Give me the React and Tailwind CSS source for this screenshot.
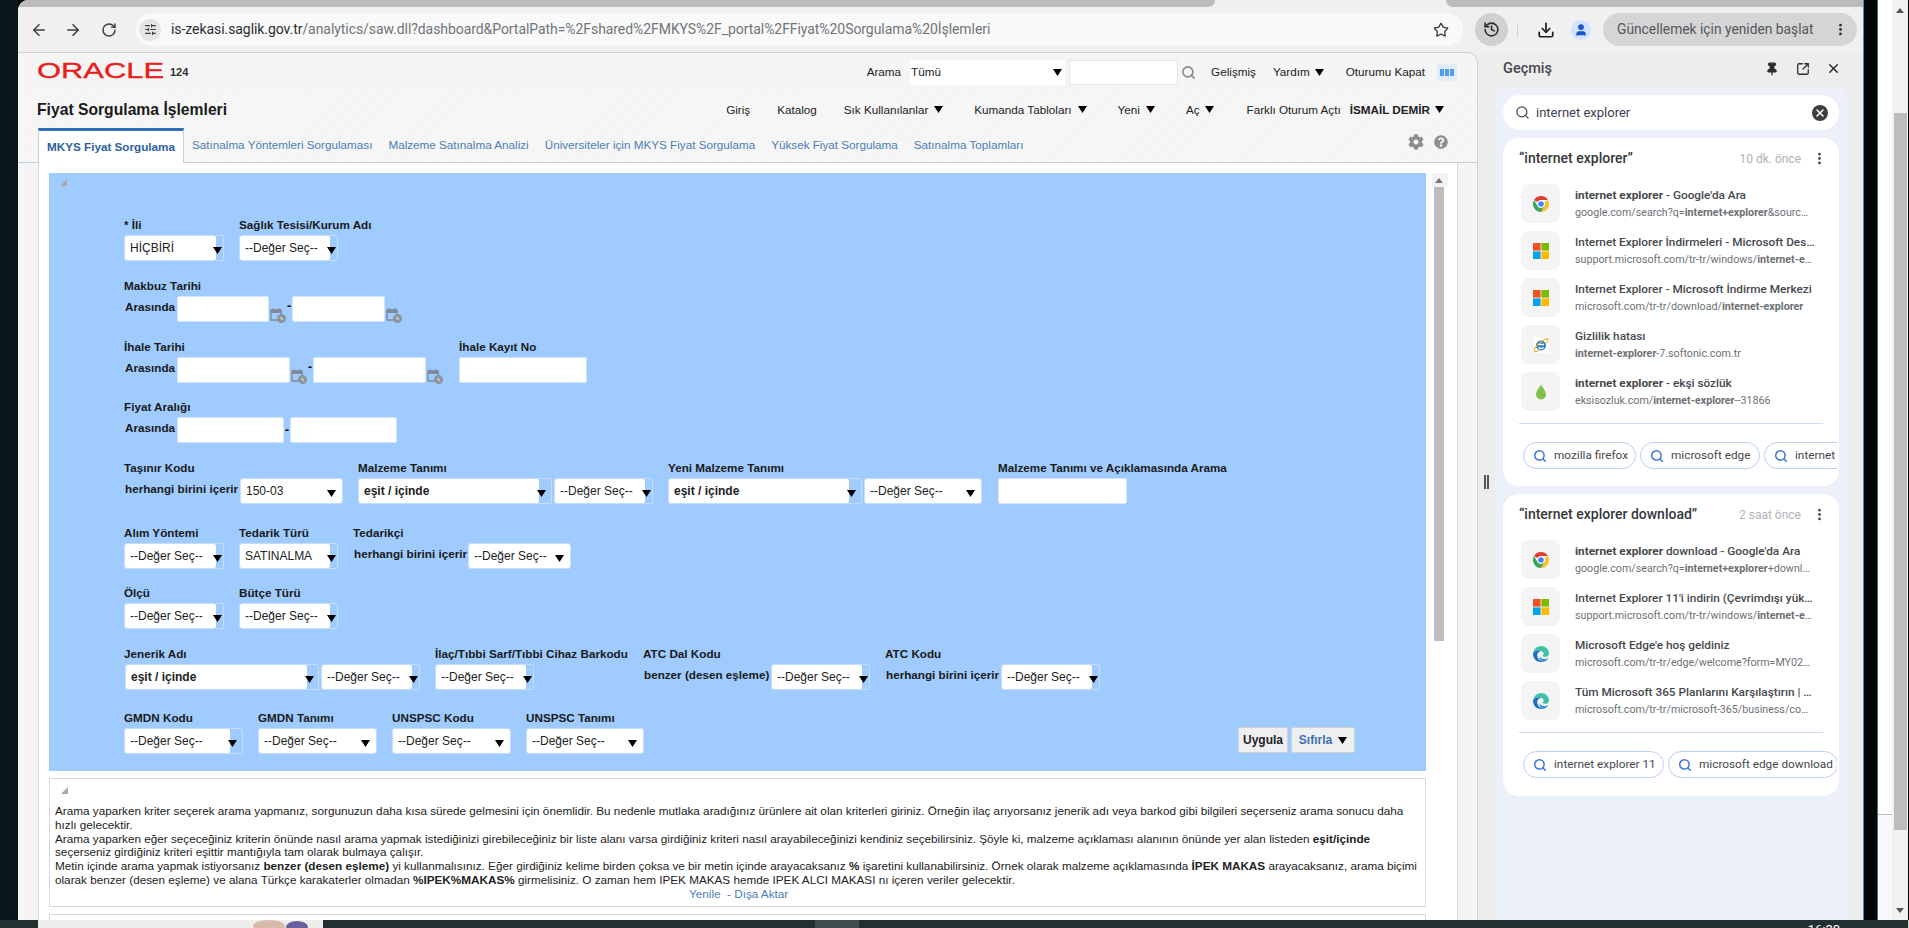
import { ArrowLeft, ArrowRight, RotateCw, Star, History, Download, User, MoreVertical, Pin, SquareArrowOutUpRight, X, Search, SlidersHorizontal } from 'lucide-react'
import { FaCog, FaQuestionCircle } from 'react-icons/fa'

const sans = 'font-["Liberation_Sans",Arial,sans-serif]'
const roboto = 'font-["Roboto",sans-serif]'

function Arrow({ className = '' }) {
    return (
        <svg width="9" height="7" viewBox="0 0 9 7" className={className}>
            <path d="M0 0h9L4.5 7z" fill="#000" />
        </svg>
    )
}

function Corner() {
    return (
        <svg width="7" height="7" viewBox="0 0 7 7" className="block">
            <path d="M7 0v7H0z" fill="#a8a8a8" />
        </svg>
    )
}

// dropdown: white part + optional blue strip, arrow sits on top of the strip
function Select({ w, white, text, bold, arrowRight = 'right-[6px]' }) {
    return (
        <div className={`relative flex h-[26px] shrink-0 rounded-[2px] border border-[#c6dcf7] ${w}`}>
            <div className={`flex items-center rounded-[2px] bg-white pl-[5px] text-[12px] text-[#222] ${white} ${bold ? 'font-bold' : ''}`}>
                {text}
            </div>
            <Arrow className={`absolute top-[11px] ${arrowRight}`} />
        </div>
    )
}

function Input({ w }) {
    return <div className={`h-[26px] shrink-0 rounded-[2px] border border-[#d4e5fa] bg-white ${w}`} />
}

function Calendar() {
    return (
        <svg width="18" height="17" viewBox="0 0 18 17" className="mt-[11px] shrink-0">
            <path d="M2 3h10v10H2z" fill="none" stroke="#7d8a99" strokeWidth="1.3" />
            <path d="M2 3h10v2.5H2zM4 1v2M10 1v2" fill="#7d8a99" stroke="#7d8a99" />
            <circle cx="12.5" cy="11.5" r="4.5" fill="#8c949c" />
            <path d="M12 10v2h2.2" stroke="#dfe6ee" fill="none" />
        </svg>
    )
}

function Field({ label, className = '', children }) {
    return (
        <div className={`shrink-0 ${className}`}>
            <div className="mb-[2px] h-[15px] whitespace-nowrap text-[11.7px] font-bold leading-[13px] text-[#1a1a1a]">{label}</div>
            <div className="flex h-[26px] items-start">{children}</div>
        </div>
    )
}

function Cap({ className = '', children }) {
    return <div className={`flex h-[22px] shrink-0 items-center whitespace-nowrap text-[11.7px] font-bold text-[#1a1a1a] ${className}`}>{children}</div>
}

const PICK = '--Değer Seç--'

function ChromeIcon() {
    return (
        <svg width="16" height="16" viewBox="0 0 16 16">
            <path d="M8 0a8 8 0 0 1 6.93 4H8a4 4 0 0 0-3.46 2L1.07 4A8 8 0 0 1 8 0z" fill="#e33b2e" />
            <path d="M14.93 4A8 8 0 0 1 8 16l3.46-6A4 4 0 0 0 11.46 6z" fill="#fbc02d" />
            <path d="M8 16A8 8 0 0 1 1.07 4l3.47 6A4 4 0 0 0 8 12l3.46-2z" fill="#3aa757" />
            <circle cx="8" cy="8" r="3.7" fill="#fff" />
            <circle cx="8" cy="8" r="2.8" fill="#4285f4" />
        </svg>
    )
}

function MsIcon() {
    return (
        <svg width="16" height="16" viewBox="0 0 16 16">
            <path d="M0 0h7.6v7.6H0z" fill="#f25022" />
            <path d="M8.4 0H16v7.6H8.4z" fill="#7fba00" />
            <path d="M0 8.4h7.6V16H0z" fill="#00a4ef" />
            <path d="M8.4 8.4H16V16H8.4z" fill="#ffb900" />
        </svg>
    )
}

function IeIcon() {
    return (
        <svg width="16" height="16" viewBox="0 0 16 16">
            <path d="M0 0h16v16H0z" fill="#fff" />
            <circle cx="8" cy="8.5" r="5" fill="#2f7fd0" />
            <path d="M5 7.5h6M5.500 10.500c1.500 1.500 4 1.300 5-.2" stroke="#fff" strokeWidth="1.5" fill="none" />
            <path d="M1.500 14C.5 11 8 3 15 1.500M15 1.500c1 1-.5 3-2 5M1.500 14c1 1 3 .5 4.500-.8" stroke="#e5b52f" strokeWidth="1.1" fill="none" />
        </svg>
    )
}

function DropIcon() {
    return (
        <svg width="16" height="16" viewBox="0 0 16 16">
            <path d="M8 .5C9 3 13 6.500 13 10.500a5 5 0 0 1-10 0C3 6.500 7 3 8 .5z" fill="#81c14b" />
        </svg>
    )
}

function EdgeIcon() {
    return (
        <svg width="16" height="16" viewBox="0 0 16 16">
            <path d="M.2 7C1 3 4 0 8 0c4.500 0 8 3.400 8 7.400 0 2.200-1.800 3.400-3.800 3.400-1.300 0-2.500-.4-3-1 1-.4 1.500-1.300 1.400-2.300C10.400 5.600 8.600 4.300 6.300 4.300 3.800 4.300 1.500 5.200.2 7z" fill="#3fc3a8" />
            <path d="M.2 7c1.300-1.800 3.600-2.700 6.100-2.700 1 0 1.800.2 2.500.7C6 5 4.200 6.800 4.200 9.300c0 3.200 2.800 6 6.300 6.500-.8.200-1.600.2-2.500.2-4.500 0-8-3.600-8-8 0-.3.100-.7.200-1z" fill="#1f6fc4" />
            <path d="M10.500 15.800c-2.800-.6-4.500-3-3.800-5.300.7 1.800 2.900 2.800 5.300 2.600 1.200-.1 2.400-.5 3.200-1.200-.9 2-2.700 3.400-4.700 3.900z" fill="#2b8fd8" />
        </svg>
    )
}

function HistoryRow({ icon, title, url }) {
    return (
        <div className="flex h-[39px] items-center">
            <div className="ml-[2px] flex h-[39px] w-[39px] shrink-0 items-center justify-center rounded-[8px] bg-[#f4f4f4]">{icon}</div>
            <div className="ml-[15px] min-w-0 whitespace-nowrap">
                <div className="h-[18px] text-[11.8px] font-medium leading-[18px] text-[#45484d]">{title}</div>
                <div className="h-[17px] text-[10.7px] leading-[17px] text-[#6d7074]">{url}</div>
            </div>
        </div>
    )
}

function Chip({ w, text }) {
    return (
        <div className={`flex h-[27px] shrink-0 items-center overflow-hidden rounded-full border border-[#b9cdf5] bg-white pl-[9px] ${w}`}>
            <Search size={14} strokeWidth={2.6} className="shrink-0 text-[#3f74d8]" />
            <span className="ml-[7px] whitespace-nowrap text-[11.8px] text-[#45484d]">{text}</span>
        </div>
    )
}

function HistoryCard({ title, ago, rows, chips, className = '' }) {
    return (
        <div className={`rounded-[16px] bg-white px-[16px] ${className}`}>
            <div className="flex h-[41px] items-center">
                <span className="whitespace-nowrap text-[14px] font-medium text-[#35383c]">{title}</span>
                <span className="ml-auto text-[12px] text-[#b0b3b8]">{ago}</span>
                <MoreVertical size={15} strokeWidth={2.5} className="ml-[11px] mr-[-4px] text-[#45484d]" />
            </div>
            <div className="mt-[5px] flex flex-col gap-[8px]">
                {rows.map((r, i) => <HistoryRow key={i} {...r} />)}
            </div>
            <div className="mt-[12px] h-px bg-[#cfdcf5]" />
            <div className="mr-[-14px] mt-[18px] flex gap-[4px] overflow-hidden pl-[4px]">
                {chips.map((c) => <Chip key={c.text} {...c} />)}
            </div>
        </div>
    )
}

const firstRows = [
    { icon: <ChromeIcon />, title: <><b className="font-bold">internet explorer</b> - Google'da Ara</>, url: <>google.com/search?q=<b className="font-bold">internet+explorer</b>&amp;sourc…</> },
    { icon: <MsIcon />, title: 'Internet Explorer İndirmeleri - Microsoft Des…', url: <>support.microsoft.com/tr-tr/windows/<b className="font-bold">internet-e</b>…</> },
    { icon: <MsIcon />, title: 'Internet Explorer - Microsoft İndirme Merkezi', url: <>microsoft.com/tr-tr/download/<b className="font-bold">internet-explorer</b></> },
    { icon: <IeIcon />, title: 'Gizlilik hatası', url: <><b className="font-bold">internet-explorer</b>-7.softonic.com.tr</> },
    { icon: <DropIcon />, title: <><b className="font-bold">internet explorer</b> - ekşi sözlük</>, url: <>eksisozluk.com/<b className="font-bold">internet-explorer</b>--31866</> },
]

const secondRows = [
    { icon: <ChromeIcon />, title: <><b className="font-bold">internet explorer</b> download - Google'da Ara</>, url: <>google.com/search?q=<b className="font-bold">internet+explorer</b>+downl…</> },
    { icon: <MsIcon />, title: "Internet Explorer 11'i indirin (Çevrimdışı yük…", url: <>support.microsoft.com/tr-tr/windows/<b className="font-bold">internet-e</b>…</> },
    { icon: <EdgeIcon />, title: "Microsoft Edge'e hoş geldiniz", url: 'microsoft.com/tr-tr/edge/welcome?form=MY02…' },
    { icon: <EdgeIcon />, title: 'Tüm Microsoft 365 Planlarını Karşılaştırın | …', url: 'microsoft.com/tr-tr/microsoft-365/business/co…' },
]

function Toolbar() {
    return (
        <div className={`flex h-[45px] items-center bg-[#f0f0f0] pl-[11px] ${roboto}`}>
            <ArrowLeft size={18} strokeWidth={2} className="ml-px text-[#3c4043]" />
            <ArrowRight size={18} strokeWidth={2} className="ml-[16px] text-[#3c4043]" />
            <RotateCw size={16} strokeWidth={2.2} className="ml-[19px] text-[#3c4043]" />
            <div className="ml-[19px] flex h-[33px] w-[1327px] items-center rounded-full bg-[#f9f9f9]">
                <div className="ml-[3px] flex h-[22px] w-[22px] items-center justify-center rounded-full bg-[#e6e6e6]">
                    <SlidersHorizontal size={13} strokeWidth={2.2} className="text-[#3c4043]" />
                </div>
                <div className="ml-[10px] whitespace-nowrap text-[14px] tracking-[-0.065px] text-[#70757a]">
                    <span className="text-[#2b2e31]">is-zekasi.saglik.gov.tr</span>/analytics/saw.dll?dashboard&amp;PortalPath=%2Fshared%2FMKYS%2F_portal%2FFiyat%20Sorgulama%20İşlemleri
                </div>
                <Star size={16} strokeWidth={2} className="ml-auto mr-[14px] text-[#3c4043]" />
            </div>
            <div className="ml-[12px] flex h-[33px] w-[33px] items-center justify-center rounded-full bg-[#d0d0d0]">
                <History size={17} strokeWidth={2.2} className="text-[#2b2e31]" />
            </div>
            <div className="ml-[9px] h-[14px] w-px bg-[#cfcfcf]" />
            <Download size={18} strokeWidth={2.3} className="ml-[19px] text-[#1f1f1f]" />
            <div className="ml-[16px] flex h-[20px] w-[20px] items-center justify-center rounded-full bg-[#d3e3fd]">
                <User size={14} fill="#1c56c8" strokeWidth={2} className="text-[#1c56c8]" />
            </div>
            <div className="ml-[12px] flex h-[33px] w-[254px] items-center rounded-full bg-[#d5d5d5] pl-[14px] text-[13.8px] text-[#54575b]">
                <span className="whitespace-nowrap">Güncellemek için yeniden başlat</span>
                <MoreVertical size={15} strokeWidth={2.5} className="ml-auto mr-[9px] text-[#2b2e31]" />
            </div>
        </div>
    )
}

function PageHeader() {
    return (
        <div className="flex h-[38px] items-center pl-[19px] pr-[20px] text-[11.7px] text-[#222]">
            <svg width="130" height="24" className="mt-[-3px] shrink-0">
                <text x="0" y="19" fontFamily="Liberation Sans" fontSize="22" textLength="127" lengthAdjust="spacingAndGlyphs" fill="#e8201b" stroke="#e8201b" strokeWidth="0.35">ORACLE</text>
            </svg>
            <span className="ml-[3px] text-[11px] font-bold text-[#333]">124</span>
            <span className="ml-auto">Arama</span>
            <div className="relative ml-[9px] flex h-[25px] w-[155px] items-center bg-white pl-px">
                Tümü
                <Arrow className="absolute right-[3px] top-[9px]" />
            </div>
            <div className="ml-[4px] h-[25px] w-[109px] border border-[#e5e5e5] bg-white" />
            <Search size={15} strokeWidth={2.6} className="ml-[3px] text-[#8b8b8b]" />
            <span className="ml-[15px]">Gelişmiş</span>
            <span className="ml-[17px]">Yardım</span>
            <Arrow className="ml-[5px]" />
            <span className="ml-[22px]">Oturumu Kapat</span>
            <div className="ml-[12px] flex h-[17px] w-[20px] items-center justify-center gap-px bg-[#e4edf7]">
                <div className="h-[7px] w-[4px] bg-[#4f9cf0]" />
                <div className="h-[7px] w-[4px] bg-[#4f9cf0]" />
                <div className="h-[7px] w-[4px] bg-[#4f9cf0]" />
            </div>
        </div>
    )
}

function PageNav() {
    return (
        <div className="flex h-[37px] items-center pl-[19px] pr-[33px] text-[11.7px] text-[#222]">
            <h1 className="whitespace-nowrap text-[15.7px] font-bold text-[#1b1b1b]">Fiyat Sorgulama İşlemleri</h1>
            <span className="ml-auto">Giriş</span>
            <span className="ml-[27px]">Katalog</span>
            <span className="ml-[27px]">Sık Kullanılanlar</span>
            <Arrow className="ml-[6px]" />
            <span className="ml-[31px]">Kumanda Tabloları</span>
            <Arrow className="ml-[6px]" />
            <span className="ml-[31px]">Yeni</span>
            <Arrow className="ml-[6px]" />
            <span className="ml-[31px]">Aç</span>
            <Arrow className="ml-[5px]" />
            <span className="ml-[33px]">Farklı Oturum Açtı</span>
            <span className="ml-[9px] font-bold">İSMAİL DEMİR</span>
            <Arrow className="ml-[5px]" />
        </div>
    )
}

function PageTabs() {
    return (
        <div className="flex h-[35px] items-center border-b border-[#c8ced6] pl-[20px] pr-[29px] text-[11.7px] text-[#4d7db5]">
            <div className="flex h-[35px] w-[146px] items-center justify-center border-x border-[#c8ced6] border-t-[3px] border-t-[#2f6fba] bg-white font-bold text-[#2c5f9e]">
                MKYS Fiyat Sorgulama
            </div>
            <span className="ml-[8px]">Satınalma Yöntemleri Sorgulaması</span>
            <span className="ml-[16px]">Malzeme Satınalma Analizi</span>
            <span className="ml-[16px]">Üniversiteler için MKYS Fiyat Sorgulama</span>
            <span className="ml-[16px]">Yüksek Fiyat Sorgulama</span>
            <span className="ml-[16px]">Satınalma Toplamları</span>
            <FaCog size={16} className="mb-[7px] ml-auto text-[#8e8e8e]" />
            <FaQuestionCircle size={14} className="mb-[7px] ml-[10px] text-[#8e8e8e]" />
        </div>
    )
}

function SearchForm() {
    return (
        <div className="h-[598px] bg-[#a0cbff] pl-[11px] pt-[6px]">
            <Corner />
            <div className="pl-[64px]">
                <div className="mt-[32px] flex">
                    <Field label="* İli" className="w-[115px]"><Select w="w-[100px]" white="w-[91px]" text="HİÇBİRİ" arrowRight="right-[1px]" /></Field>
                    <Field label="Sağlık Tesisi/Kurum Adı"><Select w="w-[99px]" white="w-[90px]" text={PICK} arrowRight="right-[1px]" /></Field>
                </div>
                <div className="mt-[18px] flex">
                    <Field label="Makbuz Tarihi">
                        <Cap className="w-[53px] pl-px">Arasında</Cap>
                        <Input w="w-[92px]" />
                        <Calendar />
                        <span className="w-[5px] text-[12px] font-bold leading-[20px]">-</span>
                        <Input w="w-[93px]" />
                        <Calendar />
                    </Field>
                </div>
                <div className="mt-[18px] flex">
                    <Field label="İhale Tarihi" className="w-[335px]">
                        <Cap className="w-[53px] pl-px">Arasında</Cap>
                        <Input w="w-[113px]" />
                        <Calendar />
                        <span className="w-[5px] text-[12px] font-bold leading-[20px]">-</span>
                        <Input w="w-[113px]" />
                        <Calendar />
                    </Field>
                    <Field label="İhale Kayıt No"><Input w="w-[128px]" /></Field>
                </div>
                <div className="mt-[17px] flex">
                    <Field label="Fiyat Aralığı">
                        <Cap className="w-[53px] pl-px">Arasında</Cap>
                        <Input w="w-[107px]" />
                        <span className="w-[6px] pl-px text-[12px] font-bold leading-[26px]">-</span>
                        <Input w="w-[107px]" />
                    </Field>
                </div>
                <div className="mt-[18px] flex">
                    <Field label="Taşınır Kodu" className="w-[234px]">
                        <Cap className="w-[116px] pl-px">herhangi birini içerir</Cap>
                        <Select w="w-[103px]" white="w-[101px]" text="150-03" />
                    </Field>
                    <Field label="Malzeme Tanımı" className="w-[310px]">
                        <Select w="w-[194px]" white="w-[180px]" text="eşit / içinde" bold arrowRight="right-[5px]" />
                        <div className="ml-[2px]"><Select w="w-[99px]" white="w-[90px]" text={PICK} arrowRight="right-[1px]" /></div>
                    </Field>
                    <Field label="Yeni Malzeme Tanımı" className="w-[330px]">
                        <Select w="w-[194px]" white="w-[180px]" text="eşit / içinde" bold arrowRight="right-[5px]" />
                        <div className="ml-[2px]"><Select w="w-[118px]" white="w-[116px]" text={PICK} /></div>
                    </Field>
                    <Field label="Malzeme Tanımı ve Açıklamasında Arama"><Input w="w-[129px]" /></Field>
                </div>
                <div className="mt-[22px] flex">
                    <Field label="Alım Yöntemi" className="w-[115px]"><Select w="w-[100px]" white="w-[91px]" text={PICK} arrowRight="right-[1px]" /></Field>
                    <Field label="Tedarik Türü" className="w-[114px]"><Select w="w-[99px]" white="w-[90px]" text="SATINALMA" arrowRight="right-[1px]" /></Field>
                    <Field label="Tedarikçi">
                        <Cap className="w-[115px] pl-px">herhangi birini içerir</Cap>
                        <Select w="w-[103px]" white="w-[101px]" text={PICK} />
                    </Field>
                </div>
                <div className="mt-[17px] flex">
                    <Field label="Ölçü" className="w-[115px]"><Select w="w-[100px]" white="w-[91px]" text={PICK} arrowRight="right-[1px]" /></Field>
                    <Field label="Bütçe Türü"><Select w="w-[99px]" white="w-[90px]" text={PICK} arrowRight="right-[1px]" /></Field>
                </div>
                <div className="mt-[18px] flex">
                    <Field label="Jenerik Adı" className="w-[311px]">
                        <div className="ml-px"><Select w="w-[194px]" white="w-[181px]" text="eşit / içinde" bold arrowRight="right-[4px]" /></div>
                        <div className="ml-[2px]"><Select w="w-[99px]" white="w-[90px]" text={PICK} arrowRight="right-[1px]" /></div>
                    </Field>
                    <Field label="İlaç/Tıbbi Sarf/Tıbbi Cihaz Barkodu" className="w-[208px]"><Select w="w-[99px]" white="w-[90px]" text={PICK} arrowRight="right-[1px]" /></Field>
                    <Field label="ATC Dal Kodu" className="w-[242px]">
                        <Cap className="w-[128px] pl-px">benzer (desen eşleme)</Cap>
                        <Select w="w-[99px]" white="w-[90px]" text={PICK} arrowRight="right-[1px]" />
                    </Field>
                    <Field label="ATC Kodu">
                        <Cap className="w-[116px] pl-px">herhangi birini içerir</Cap>
                        <Select w="w-[99px]" white="w-[90px]" text={PICK} arrowRight="right-[1px]" />
                    </Field>
                </div>
                <div className="mt-[21px] flex pr-[71px]">
                    <Field label="GMDN Kodu" className="w-[134px]"><Select w="w-[119px]" white="w-[105px]" text={PICK} arrowRight="right-[5px]" /></Field>
                    <Field label="GMDN Tanımı" className="w-[134px]"><Select w="w-[119px]" white="w-[117px]" text={PICK} /></Field>
                    <Field label="UNSPSC Kodu" className="w-[134px]"><Select w="w-[119px]" white="w-[117px]" text={PICK} /></Field>
                    <Field label="UNSPSC Tanımı"><Select w="w-[118px]" white="w-[116px]" text={PICK} /></Field>
                    <div className="ml-auto mt-[16px] flex gap-[3px] text-[12px]">
                        <div className="flex h-[26px] w-[50px] items-center justify-center rounded-[2px] border border-[#cfd3d8] bg-[#eeeff1] font-bold text-[#222]">Uygula</div>
                        <div className="flex h-[26px] w-[64px] items-center justify-center gap-[6px] rounded-[2px] border border-[#cfd3d8] bg-[#eeeff1] font-bold text-[#3f6fad]">
                            Sıfırla
                            <Arrow />
                        </div>
                    </div>
                </div>
            </div>
        </div>
    )
}

function Notes() {
    return (
        <div className="mt-[7px] h-[129px] border border-[#d3dae3] bg-white pl-[5px] pt-[8px] text-[11.73px] leading-[13.8px] text-[#222]">
            <div className="ml-[6px] mb-[10px]"><Corner /></div>
            <div className="whitespace-nowrap">
                <div>Arama yaparken kriter seçerek arama yapmanız, sorgunuzun daha kısa sürede gelmesini için önemlidir. Bu nedenle mutlaka aradığınız ürünlere ait olan kriterleri giriniz. Örneğin ilaç arıyorsanız jenerik adı veya barkod gibi bilgileri seçerseniz arama sonucu daha</div>
                <div>hızlı gelecektir.</div>
                <div>Arama yaparken eğer seçeceğiniz kriterin önünde nasıl arama yapmak istediğinizi girebileceğiniz bir liste alanı varsa girdiğiniz kriteri nasıl arayabileceğinizi kendiniz seçebilirsiniz. Şöyle ki, malzeme açıklaması alanının önünde yer alan listeden <b>eşit/içinde</b></div>
                <div>seçerseniz girdiğiniz kriteri eşittir mantığıyla tam olarak bulmaya çalışır.</div>
                <div>Metin içinde arama yapmak istiyorsanız <b>benzer (desen eşleme)</b> yi kullanmalısınız. Eğer girdiğiniz kelime birden çoksa ve bir metin içinde arayacaksanız <b>%</b> işaretini kullanabilirsiniz. Örnek olarak malzeme açıklamasında <b>İPEK MAKAS</b> arayacaksanız, arama biçimi</div>
                <div>olarak benzer (desen eşleme) ve alana Türkçe karakaterler olmadan <b>%IPEK%MAKAS%</b> girmelisiniz. O zaman hem IPEK MAKAS hemde IPEK ALCI MAKASI nı içeren veriler gelecektir.</div>
            </div>
            <div className="ml-[634px] text-[#4d7db5]">Yenile &nbsp;- Dışa Aktar</div>
        </div>
    )
}

function PagePanel() {
    return (
        <div className={`flex w-[1460px] shrink-0 flex-col overflow-hidden rounded-tr-[10px] border-r border-t border-[#cfcfcf] bg-[#f5f5f5] ${sans}`}>
            <PageHeader />
            <div className="bg-[repeating-linear-gradient(135deg,#f3f3f3_0px,#f3f3f3_1px,#f7f7f7_1px,#f7f7f7_3px)]">
                <PageNav />
                <PageTabs />
            </div>
            <div className="ml-[20px] mr-[19px] flex flex-1 overflow-hidden border-x border-[#d3dae3] bg-white pl-[10px] pt-[10px]">
                <div className="w-[1377px] shrink-0">
                    <SearchForm />
                    <Notes />
                    <div className="mt-[7px] h-[20px] border border-[#d3dae3]" />
                </div>
                <div className="ml-[6px] w-[16px]">
                    <div className="flex h-[14px] items-center bg-[#f2f2f2] pl-[3px]">
                        <svg width="8" height="5" viewBox="0 0 8 5"><path d="M4 0l4 5H0z" fill="#777" /></svg>
                    </div>
                    <div className="ml-[2px] h-[454px] w-[10px] bg-[#bdbdbd]" />
                </div>
            </div>
        </div>
    )
}

function HistoryPanel() {
    return (
        <div className={`flex min-w-0 flex-1 bg-[#ededed] ${roboto}`}>
            <div className="flex w-[17px] shrink-0 items-center justify-center">
                <div className="mt-[-9px] flex gap-px">
                    <div className="h-[14px] w-[2px] bg-[#555]" />
                    <div className="h-[14px] w-[2px] bg-[#555]" />
                </div>
            </div>
            <div className="flex w-[352px] flex-col">
                <div className="flex h-[35px] shrink-0 items-center pl-[8px] pr-[6px] text-[#2b2e31]">
                    <span className="mb-[2px] text-[14.5px] font-medium text-[#45484d]">Geçmiş</span>
                    <Pin size={14} fill="#2b2e31" strokeWidth={2.2} className="mb-[2px] ml-auto" />
                    <SquareArrowOutUpRight size={14} strokeWidth={2.2} className="mb-[2px] ml-[17px]" />
                    <X size={15} strokeWidth={2.4} className="mb-[2px] ml-[16px]" />
                </div>
                <div className="flex-1 rounded-t-[12px] bg-[#ecf0f8] px-[8px] pt-[8px]">
                    <div className="flex h-[35px] items-center rounded-full bg-white pl-[12px] pr-[11px]">
                        <Search size={15} strokeWidth={2} className="text-[#45484d]" />
                        <span className="ml-[6px] text-[13px] text-[#3a4152]">internet explorer</span>
                        <div className="ml-auto flex h-[16px] w-[16px] items-center justify-center rounded-full bg-[#3c4043]">
                            <X size={12} strokeWidth={3} className="text-white" />
                        </div>
                    </div>
                    <HistoryCard
                        className="mt-[8px] h-[348px]"
                        title="“internet explorer”"
                        ago="10 dk. önce"
                        rows={firstRows}
                        chips={[
                            { w: 'w-[113px]', text: 'mozilla firefox' },
                            { w: 'w-[120px]', text: 'microsoft edge' },
                            { w: 'w-[130px]', text: 'internet explorer' },
                        ]}
                    />
                    <HistoryCard
                        className="mt-[8px] h-[302px]"
                        title="“internet explorer download”"
                        ago="2 saat önce"
                        rows={secondRows}
                        chips={[
                            { w: 'w-[141px]', text: 'internet explorer 11' },
                            { w: 'w-[170px]', text: 'microsoft edge download' },
                        ]}
                    />
                </div>
            </div>
        </div>
    )
}

export default function App() {
    return (
        <div className="flex h-[928px] w-[1909px] flex-col overflow-hidden bg-black">
            <div className="flex h-[920px] shrink-0">
                <div className="w-[18px] shrink-0 bg-[#08161e]" />
                <div className="flex w-[1846px] shrink-0 flex-col overflow-hidden rounded-tl-[10px] border-r border-[#3d8fd0] bg-[#f0f0f0]">
                    <div className="flex h-[7px] shrink-0">
                        <div className="w-[1197px] rounded-br-[8px] bg-[#bcbcbc]" />
                        <div className="w-[231px]" />
                        <div className="flex-1 rounded-bl-[8px] bg-[#bcbcbc]" />
                    </div>
                    <Toolbar />
                    <div className="flex min-h-0 flex-1">
                        <PagePanel />
                        <HistoryPanel />
                    </div>
                </div>
                <div className="w-[14px] shrink-0 border-r border-[#2e7a80] bg-[#050505]" />
                <div className="flex w-[14px] shrink-0 flex-col">
                    <div className="h-[814px] bg-white" />
                    <div className="flex-1 border-t border-[#bbb] bg-[#f8f9fb]" />
                </div>
                <div className="flex w-[16px] shrink-0 flex-col items-center bg-[#f1f1f1]">
                    <svg width="8" height="5" viewBox="0 0 8 5" className="mt-[8px]"><path d="M4 0l4 5H0z" fill="#555" /></svg>
                    <div className="mt-[100px] h-[717px] w-[13px] bg-[#bdbdbd]" />
                    <svg width="8" height="5" viewBox="0 0 8 5" className="mt-[78px]"><path d="M4 5L0 0h8z" fill="#555" /></svg>
                </div>
            </div>
            <div className="flex h-[8px] shrink-0 items-start bg-[#22302f]">
                <div className="ml-[38px] flex h-[8px] w-[287px] justify-end bg-[#eeeeee] pr-[12px]">
                    <svg width="62" height="8" viewBox="0 0 62 8">
                        <ellipse cx="20" cy="6" rx="16" ry="6" fill="#d9b9a8" />
                        <ellipse cx="48" cy="7" rx="11" ry="6" fill="#6a5f9c" />
                    </svg>
                </div>
                <div className="ml-[492px] h-[8px] w-[44px] bg-[#3f4f4e]" />
                <span className={`ml-[949px] mt-[3px] text-[13px] leading-[14px] text-white ${roboto}`}>16:30</span>
                <div className="ml-[68px] h-[8px] w-px bg-[#cfcfcf]" />
            </div>
        </div>
    )
}
